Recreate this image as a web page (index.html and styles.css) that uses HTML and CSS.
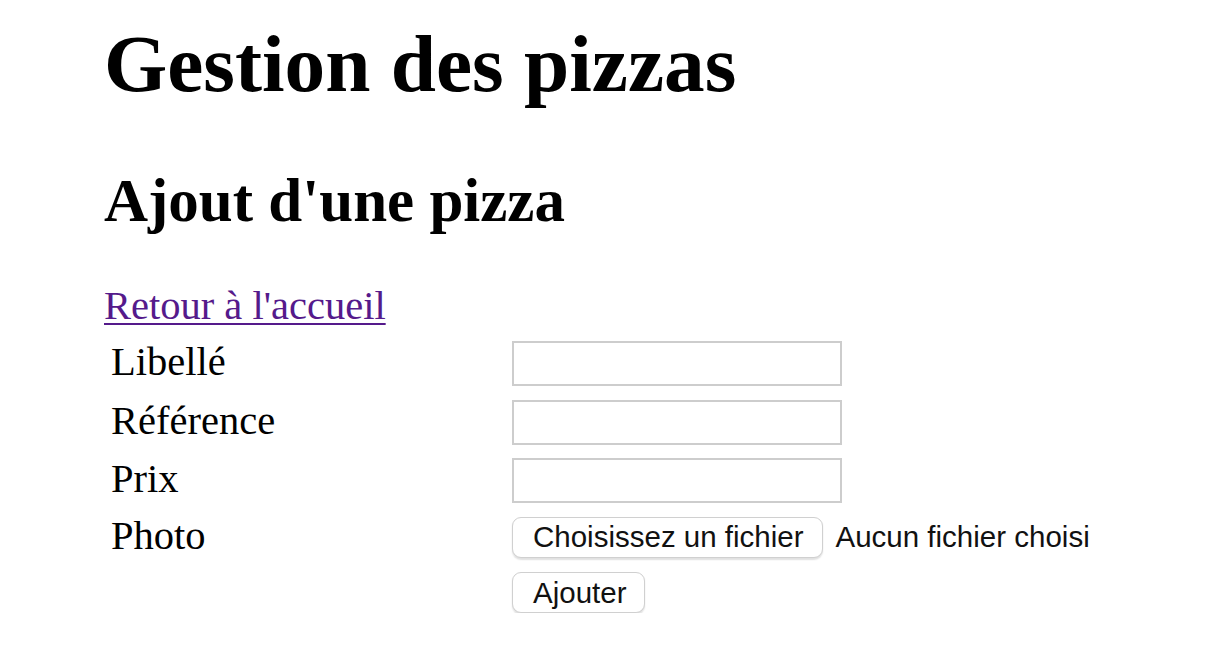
FILE: index.html
```html
<!DOCTYPE html>
<html lang="fr">
<head>
<meta charset="utf-8">
<title>Gestion des pizzas</title>
<link rel="stylesheet" href="styles.css">
</head>
<body>
<main class="page">
  <h1 class="title">Gestion des pizzas</h1>
  <h2 class="subtitle">Ajout d'une pizza</h2>
  <a class="back" href="#">Retour à l'accueil</a>
  <form class="form">
    <label class="lbl" for="libelle">Libellé</label>
    <input class="field" id="libelle" type="text">
    <label class="lbl" for="reference">Référence</label>
    <input class="field" id="reference" type="text">
    <label class="lbl" for="prix">Prix</label>
    <input class="field" id="prix" type="text">
    <span class="lbl">Photo</span>
    <div class="file">
      <button class="btn" type="button">Choisissez un fichier</button>
      <span class="file-status">Aucun fichier choisi</span>
    </div>
    <span class="lbl"></span>
    <div class="actions">
      <button class="btn" type="submit">Ajouter</button>
    </div>
  </form>
</main>
</body>
</html>
```

FILE: styles.css
```css
html, body {
  margin: 0;
  padding: 0;
  background: #fff;
}

body {
  font-family: "Liberation Serif", "Times New Roman", serif;
  color: #000;
}

.page {
  padding: 18px 0 0 104px;
  display: flex;
  flex-direction: column;
  align-items: flex-start;
}

.title {
  margin: 0;
  font-size: 81.3px;
  font-weight: bold;
  line-height: 92px;
}

.subtitle {
  margin: 56px 0 0 0;
  font-size: 61px;
  font-weight: bold;
  line-height: 69px;
}

.back {
  margin-top: 48px;
  font-size: 40.5px;
  line-height: 46px;
  color: #551a8b;
  text-decoration: underline;
  text-decoration-thickness: 2px;
  text-underline-offset: 4px;
}

.form {
  margin: 12px 0 0 7px;
  display: grid;
  grid-template-columns: 401px auto;
  align-items: center;
  row-gap: 13.5px;
}

.lbl {
  font-size: 40.5px;
  line-height: 37px;
  padding-bottom: 4px;
}

.field {
  box-sizing: border-box;
  width: 330px;
  height: 45px;
  margin: 0;
  border: 2px solid #cdcdcd;
  background: #fff;
  padding: 0 6px;
  font-size: 28px;
  outline: none;
}

.file {
  display: flex;
  align-items: center;
  gap: 13px;
}

.file-status,
.btn {
  font-family: "Liberation Sans", Arial, sans-serif;
  font-size: 29.5px;
  color: #111;
}

.btn {
  box-sizing: border-box;
  height: 41px;
  margin: 0;
  padding: 0 18px 0 20px;
  background: #fff;
  border: 1.5px solid #d0d0d0;
  border-radius: 9px;
  box-shadow: 0 1.5px 1.5px rgba(0, 0, 0, 0.12);
  line-height: 38px;
}

.actions {
  display: flex;
  padding-top: 1px;
}
```
